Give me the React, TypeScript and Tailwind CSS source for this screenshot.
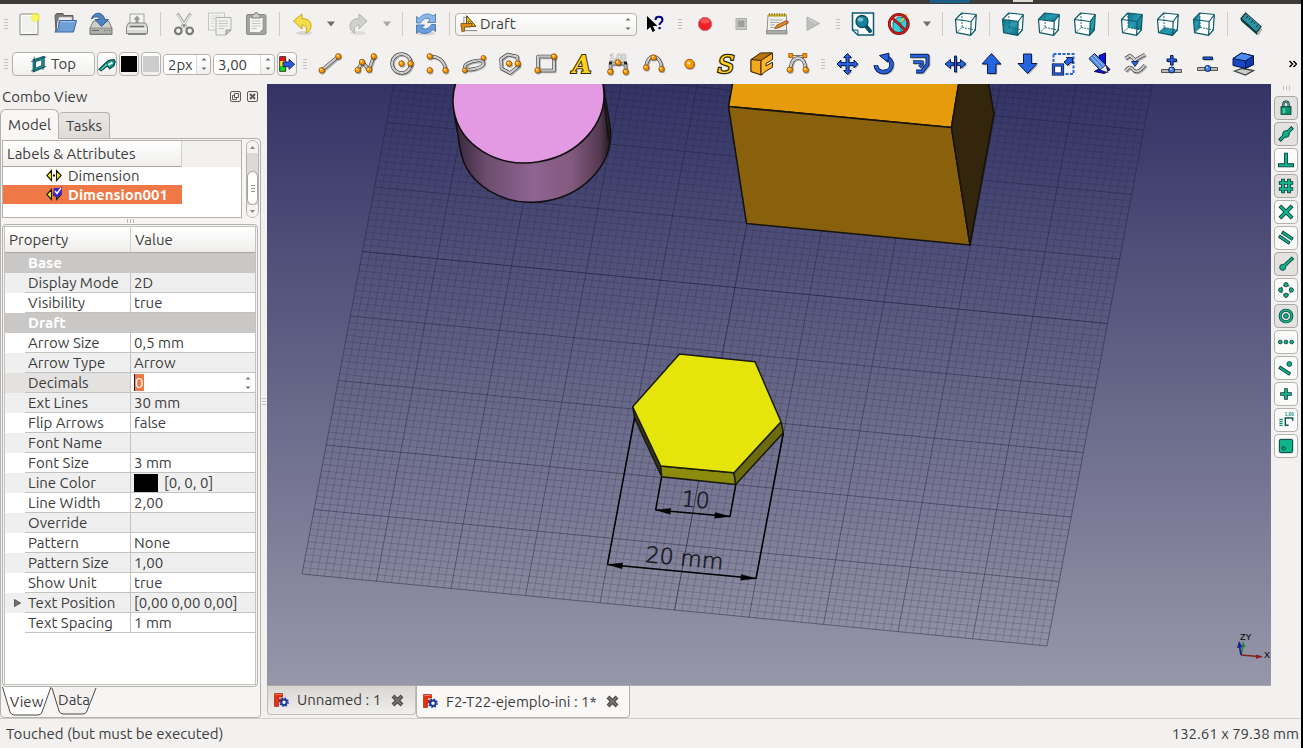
import React, { useId } from "react";

type Kids = { children?: React.ReactNode };

/* ---------- drawing helpers ---------- */

function Svg({ children, size = 24 }: Kids & { size?: number }) {
  return (
    <svg width={size} height={size} viewBox="0 0 24 24" fill="none" aria-hidden="true" className="shrink-0 overflow-visible">
      {children}
    </svg>
  );
}

function Ball({ x, y, r = 2.7 }: { x: number; y: number; r?: number }) {
  return (
    <g>
      <circle cx={x + 0.8} cy={y + 1} r={r + 0.4} fill="#00000055" />
      <circle cx={x} cy={y} r={r} fill="#ff9900" stroke="#9a5200" strokeWidth="0.9" />
      <circle cx={x - 0.8} cy={y - 0.8} r={r * 0.35} fill="#ffe3a8" />
    </g>
  );
}

function Tube({ d }: { d: string }) {
  return (
    <g strokeLinejoin="round">
      <path d={d} stroke="#00000048" strokeWidth="3.6" transform="translate(1 1)" />
      <path d={d} stroke="#4a4a4a" strokeWidth="3.4" />
      <path d={d} stroke="#efefef" strokeWidth="1.9" />
      <path d={d} stroke="#8a8a8a" strokeWidth="0.5" />
    </g>
  );
}

function Blue({ d }: { d: string }) {
  return (
    <g strokeLinejoin="round">
      <path d={d} fill="#00000045" transform="translate(1.2 1.2)" />
      <path d={d} fill="#2563e0" stroke="#0a1c50" strokeWidth="1" />
    </g>
  );
}

function BlueLine({ d, w = 3 }: { d: string; w?: number }) {
  return (
    <g strokeLinejoin="round">
      <path d={d} stroke="#00000045" strokeWidth={w + 1.5} transform="translate(1 1)" />
      <path d={d} stroke="#0a1c50" strokeWidth={w + 1.8} />
      <path d={d} stroke="#2563e0" strokeWidth={w} />
    </g>
  );
}

function Green({ d, w = 3 }: { d: string; w?: number }) {
  return (
    <g>
      <path d={d} stroke="#0a3a3c" strokeWidth={w + 2.4} strokeLinecap="square" />
      <path d={d} stroke="#0fb488" strokeWidth={w} strokeLinecap="square" />
    </g>
  );
}

function Dot({ x, y, r = 2 }: { x: number; y: number; r?: number }) {
  return <circle cx={x} cy={y} r={r} fill="#0fb488" stroke="#0a3a3c" strokeWidth="1.3" />;
}

function Cube({ face }: { face?: "front" | "top" | "right" | "rear" | "bottom" | "left" }) {
  const id = useId();
  const faces = {
    front: "M1.5 7.5 17.2 9.5 16.6 23.4 2.6 20.6Z",
    top: "M1.5 7.5 7.8 1 22.3 2.5 17.2 9.5Z",
    right: "M17.2 9.5 22.3 2.5 21.3 18 16.6 23.4Z",
    rear: "M7.8 1 22.3 2.5 21.3 18 8.2 15.5Z",
    bottom: "M2.6 20.6 8.2 15.5 21.3 18 16.6 23.4Z",
    left: "M1.5 7.5 7.8 1 8.2 15.5 2.6 20.6Z",
  };
  return (
    <Svg>
      <defs>
        <linearGradient id={id} x1="0" y1="0" x2="1" y2="1">
          <stop offset="0" stopColor="#0e7088" />
          <stop offset="0.5" stopColor="#2a9bb2" />
          <stop offset="1" stopColor="#0a6a80" />
        </linearGradient>
      </defs>
      <path d="M1.5 7.5 7.8 1 22.3 2.5 21.3 18 16.6 23.4 2.6 20.6Z" fill="#ffffff" />
      {face && <path d={faces[face]} fill={`url(#${id})`} />}
      <path d="M7.8 1 8.2 15.5 2.6 20.6M8.2 15.5 21.3 18" stroke="#0b5a68" strokeWidth="0.9" strokeDasharray="2 1" />
      <path
        d="M1.5 7.5 7.8 1 22.3 2.5 17.2 9.5ZM17.2 9.5 16.6 23.4 2.6 20.6 1.5 7.5M22.3 2.5 21.3 18 16.6 23.4"
        stroke="#0b5a68"
        strokeWidth="1.2"
        strokeLinejoin="round"
      />
    </Svg>
  );
}

/* ---------- file, view and draft icons ---------- */

const icons = {
  new: (
    <Svg>
      <rect x="3" y="2" width="18" height="20.500" rx="1" fill="#f1f1ee" stroke="#8c8d88" />
      <rect x="4.500" y="3.500" width="15" height="17.500" stroke="#ffffff" />
      <path d="M2 23h20" stroke="#00000030" />
      <circle cx="18.500" cy="5.500" r="5" fill="#f7ee3a99" />
      <circle cx="18.500" cy="5.500" r="2.800" fill="#fff65a" />
    </Svg>
  ),
  open: (
    <Svg>
      <path d="M2 3.500 3.500 1.500H10l1 2h9V8H4L3 19Z" fill="#7b7b78" stroke="#5e5e5b" />
      <path d="M6 5h13v6H5Z" fill="#eeeeec" stroke="#a5a5a0" strokeWidth="0.600" />
      <path d="M6.500 8.500h17L20.500 20H1.800L5 17Z" fill="#6ea0d8" stroke="#3565a4" />
      <path d="M7.300 9.600H22" stroke="#a9c8ec" />
    </Svg>
  ),
  save: (
    <Svg>
      <path d="M4.500 9h15l3.500 7v6.500H1V16Z" fill="#cfd0cc" stroke="#7d7e7a" />
      <path d="M1.500 16h21v6h-21Z" fill="#aeb0ab" stroke="#7d7e7a" strokeWidth="0.700" />
      <path d="M3 18.500h7M15 18.500h1M17.500 18.500h1M20 18.500h1" stroke="#6b6c69" />
      <path d="M2.500 7C3.500 2 8 .5 11 1.500c3 1 4.500 3.500 4.500 6h4l-7 7-6.500-7h4c0-3-3-4-7.500-.500Z" fill="#4f82c0" stroke="#2c578f" strokeWidth="0.900" />
    </Svg>
  ),
  print: (
    <Svg>
      <path d="M5 12V2h14v10" fill="#f4f4f2" stroke="#a2a39f" />
      <path d="M12 3.500 15.500 7.500H13.500V11h-3V7.500h-2Z" fill="#9a9b98" />
      <path d="M3.500 11h17L22.500 15v6.500h-21V15Z" fill="#d9dad7" stroke="#868783" />
      <path d="M5 14.500h14" stroke="#6e6f6c" strokeWidth="1.500" />
      <path d="M2 17h20" stroke="#ffffff" />
      <path d="M3 22.500h18" stroke="#868783" />
    </Svg>
  ),
  cut: (
    <Svg>
      <path d="M5.500 1.500 15 16.500M18.500 1.500 9 16.500" stroke="#a9aaa6" strokeWidth="3" />
      <path d="M5.700 2.500 14.500 16M18.300 2.500 9.500 16" stroke="#f2f2f0" strokeWidth="1.200" />
      <circle cx="6.300" cy="18.800" r="3.300" stroke="#7a7b78" strokeWidth="2.200" />
      <circle cx="17.700" cy="18.800" r="3.300" stroke="#7a7b78" strokeWidth="2.200" />
      <circle cx="12" cy="13.500" r="1.200" fill="#7a7b78" />
    </Svg>
  ),
  copy: (
    <Svg>
      <rect x="0.500" y="1" width="16" height="17" fill="#f3f3f1" stroke="#c4c5c1" />
      <path d="M3 4h11M3 6.500h11M3 9h3M3 11.500h3M3 14h3" stroke="#d5d5d2" />
      <path d="M8 5.500h15V18l-5 5H8Z" fill="#f0f0ee" stroke="#b0b1ad" />
      <path d="M10.500 9h9.500M10.500 11.500h9.500M10.500 14h9.500M10.500 16.500h6" stroke="#c6c6c3" />
      <path d="M23 18h-5v5Z" fill="#c8c9c5" stroke="#989994" />
    </Svg>
  ),
  paste: (
    <Svg>
      <rect x="2.500" y="2.500" width="19.500" height="20" rx="1.500" fill="#a3a4a1" stroke="#8a8b88" />
      <path d="M5.500 5.500h13.500V17l-3.500 3.500H5.500Z" fill="#f4f4f2" stroke="#8e8f8b" strokeWidth="0.700" />
      <path d="M7.500 9h9M7.500 11.500h9M7.500 14h9M7.500 16.500h5" stroke="#c6c6c3" />
      <path d="M8 2.500h2.500L11 .8h2.500l.5 1.700H16V6H8Z" fill="#cfd0cd" stroke="#7e7f7b" />
    </Svg>
  ),
  undo: (
    <Svg>
      <ellipse cx="13" cy="21" rx="8" ry="2" fill="#0000001c" />
      <path d="M2.500 9 11 2v4.500c6 0 9.500 3 9 8-.300 3-2 5.500-5 6.500 1.500-4 .500-7.500-4-8V17Z" fill="#f6dc48" stroke="#c8a416" strokeLinejoin="round" />
    </Svg>
  ),
  redo: (
    <Svg>
      <ellipse cx="11" cy="21" rx="8" ry="2" fill="#00000014" />
      <path d="M20 9 12 2v4.500c-6 0-9 3-9 8 0 3 2 5.500 5 6.500-1.500-4-.500-7.500 4-8V17Z" fill="#d0d0ce" stroke="#b4b5b1" strokeLinejoin="round" />
    </Svg>
  ),
  refresh: (
    <Svg>
      <ellipse cx="12" cy="21.500" rx="9" ry="2" fill="#0000001c" />
      <path d="M2.500 11V4.500L5 6.500C9 1 16 1 19 4l2.500-2V10.500H13.500l2.500-2.500C13.500 5.500 10 5.500 6.500 11Z" fill="#8db6e6" stroke="#4a7fc0" strokeWidth="0.900" />
      <path d="M21.500 12.500V19.500L19 17.500C15 22.500 8 22.500 5 19.500l-2.500 2V13h8L8 15.500c3 2.500 6 2 9.500-3Z" fill="#6d9dd8" stroke="#3f74b6" strokeWidth="0.900" />
    </Svg>
  ),
  whats: (
    <Svg>
      <path d="M4 4v14l3.300-3L9.500 20l2.600-1.200L10 14h4.500Z" fill="#000000" />
      <path d="M12.500 8c0-4.500 7-4.500 7 0 0 2.500-3 2.500-3 5" stroke="#000080" strokeWidth="2" />
      <path d="M15.500 15h2.200v2.200h-2.200Z" fill="#000080" />
    </Svg>
  ),
  record: (
    <Svg>
      <circle cx="12" cy="12" r="6.700" fill="#ec2229" stroke="#c8777a" />
      <ellipse cx="12" cy="9" rx="4.500" ry="2.500" fill="#ff6d70aa" />
    </Svg>
  ),
  stop: (
    <Svg>
      <rect x="7" y="6.500" width="10.500" height="11" fill="#c6c6c4" stroke="#b0b1ae" />
      <rect x="9" y="8.500" width="6.500" height="6.500" fill="#9d9e9b" />
    </Svg>
  ),
  macro: (
    <Svg>
      <path d="M3 3h18.500V19.500H2Z" fill="#f0f0ee" stroke="#8f908c" />
      <path d="M1.500 18.500h20.500V22H1.500Z" fill="#a9aaa6" stroke="#7c7d79" strokeWidth="0.700" />
      <path d="M3 2h18.500v2.500H3Z" fill="#c8b335" />
      <path d="M4.500 1v3.500M7 1v3.500M9.500 1v3.500M12 1v3.500M14.500 1v3.500M17 1v3.500M19.500 1v3.500" stroke="#8a7616" strokeWidth="0.800" />
      <path d="M5 8h12M5 10.500h9M5 13h5M5 15.500h4" stroke="#a9a9a6" />
      <path d="M9.500 16.500 12 13l9.500-4.500 1.800 2.500L13.500 16Z" fill="#d98a28" stroke="#7a4a12" strokeWidth="0.800" />
      <path d="m20.500 9 1.500-1.300 2 2.500-1.500 1Z" fill="#e05050" />
    </Svg>
  ),
  play: (
    <Svg>
      <path d="M6 5 18.500 11.500 6 18.500Z" fill="#bdbebb" stroke="#b0b1ae" />
      <path d="M7 7 15.500 11.500" stroke="#dcdcda" />
    </Svg>
  ),
  fit: (
    <Svg>
      <path d="M1.500 1h21v22H7l-5.500-5Z" fill="#ffffff" stroke="#0b5a70" strokeWidth="1.500" />
      <path d="M1.500 18H7v5Z" fill="#cfe6ea" stroke="#0b5a70" />
      <path d="m14.500 13.500 4.500 5.500" stroke="#0b4e60" strokeWidth="4" strokeLinecap="round" />
      <circle cx="11" cy="9.500" r="6" fill="#16819a" stroke="#0b4e60" strokeWidth="1.300" />
      <ellipse cx="9.500" cy="7.500" rx="2.800" ry="2" fill="#7cc6d4" />
    </Svg>
  ),
  nodraw: (
    <Svg>
      <path d="M6 10 11 5l9 1-1 11-5 4-8-1Z" fill="#35d0d8" stroke="#0b7a86" />
      <path d="M6 10 14 11l6-5M14 11v10" stroke="#0b8a96" />
      <path d="m14 10 6-8" stroke="#e8c030" strokeWidth="2" />
      <circle cx="11.800" cy="12" r="9.500" stroke="#8b1010" strokeWidth="2.800" />
      <path d="m5 5.500 13.500 13" stroke="#8b1010" strokeWidth="2.800" />
      <circle cx="11.800" cy="12" r="9.500" stroke="#cc2020" strokeWidth="1.300" />
      <path d="m5 5.500 13.500 13" stroke="#cc2020" strokeWidth="1.300" />
    </Svg>
  ),
  ruler: (
    <Svg>
      <path d="m8 2 14.500 14.500-4 6L4 9Z" fill="#00000040" transform="translate(1 1)" />
      <path d="M6.500 1 22 14.500 17.500 20.500 2 6.500Z" fill="#2a96a6" stroke="#123238" strokeWidth="1.200" />
      <path d="m2 6.500 15.500 14 .5 2L2.500 9Z" fill="#0c4854" stroke="#123238" strokeWidth="0.800" />
      <path d="m9 3.500-2 3M11.500 5.500l-1.500 2M14 8l-2 3M16.500 10l-1.500 2M19 12.500l-2 3" stroke="#0a2a30" />
      <path d="M7.500 2.300 21 14.300" stroke="#5cc0cc" strokeWidth="0.600" />
    </Svg>
  ),
  line: (
    <Svg>
      <Tube d="M4 18 20 4.500" />
      <Ball x={3.7} y={18.3} />
      <Ball x={20.3} y={4.3} />
    </Svg>
  ),
  wire: (
    <Svg>
      <Tube d="M3.700 18 8 10l7 7.500L19.700 4.500" />
      <Ball x={3.7} y={18} />
      <Ball x={8} y={10} />
      <Ball x={15} y={17.5} />
      <Ball x={19.7} y={4.3} />
    </Svg>
  ),
  circle: (
    <Svg>
      <Tube d="M21 11.500a9.500 9.500 0 1 1-19 0 9.500 9.500 0 0 1 19 0Z" />
      <Ball x={11.5} y={11.5} />
      <Ball x={20.5} y={11.5} />
    </Svg>
  ),
  arc: (
    <Svg>
      <Tube d="M4 4.500C13 4 19 10 19.500 18" />
      <Ball x={3.7} y={4.3} />
      <Ball x={3.7} y={18.3} />
      <Ball x={19.5} y={18.3} />
    </Svg>
  ),
  ellipse: (
    <Svg>
      <Tube d="M2.500 15.500C2 10 21 5.500 21.500 10.500 22 16 4 20 2.500 15.500Z" />
      <Ball x={2.7} y={18.3} r={2.3} />
      <Ball x={21.3} y={5.8} r={2.3} />
    </Svg>
  ),
  polygon: (
    <Svg>
      <Tube d="M9.500 2.500 19 4.500 20.500 14 12 21 3.500 16.500 3 7Z" />
      <Ball x={11} y={11.5} />
      <Ball x={19.7} y={11.5} />
    </Svg>
  ),
  rect: (
    <Svg>
      <Tube d="M4 4.500H20V18.500H4Z" />
      <Ball x={3.5} y={18.3} />
      <Ball x={20} y={4.5} />
    </Svg>
  ),
  text: (
    <Svg>
      <text x="12" y="21" textAnchor="middle" fontFamily="DejaVu Serif" fontWeight="700" fontStyle="italic" fontSize="24" fill="#ffd21a" stroke="#2c2500" strokeWidth="2" paintOrder="stroke">A</text>
    </Svg>
  ),
  dim: (
    <Svg>
      <Tube d="M4.500 19V11.500h15V19" />
      <text x="12" y="7.500" textAnchor="middle" fontFamily="Liberation Sans" fontSize="8.500" fill="#ffffff" stroke="#888888" strokeWidth="0.800" paintOrder="stroke">1,00</text>
      <path d="M3 9.500h3v3H3ZM18 9.500h3v3h-3Z" fill="#222222" />
      <Ball x={12} y={10.5} />
      <Ball x={4.3} y={19.7} />
      <Ball x={19.7} y={19.7} />
    </Svg>
  ),
  bspline: (
    <Svg>
      <Tube d="M4 15.500C5 0 18.500 1 20 17" />
      <Ball x={11.5} y={5.5} />
      <Ball x={4.2} y={15.5} />
      <Ball x={19.5} y={17} />
    </Svg>
  ),
  point: (
    <Svg>
      <Ball x={11.5} y={12} r={4.7} />
    </Svg>
  ),
  shapestring: (
    <Svg>
      <text x="12" y="20.500" textAnchor="middle" fontFamily="DejaVu Serif" fontStyle="italic" fontSize="25" fill="#ffd21a" stroke="#2c2500" strokeWidth="2.500" paintOrder="stroke">S</text>
    </Svg>
  ),
  facebinder: (
    <Svg>
      <path d="M1 7.500 10.500 1 22 .8 12 8V23L1 19.500Z" fill="#b87408" stroke="#3a2500" strokeLinejoin="round" />
      <path d="M1 7.500 11 8.500V23L1 19.500Z" fill="#f5a81c" stroke="#3a2500" strokeLinejoin="round" />
      <path d="M11 8.500 22.500 1v6.500L16 11.500v2.500l6.500-3.800v5L16 19l-5 4Z" fill="#ffb52b" stroke="#3a2500" strokeLinejoin="round" />
    </Svg>
  ),
  bezier: (
    <Svg>
      <path d="M4.500 3.500h15" stroke="#777777" />
      <Tube d="M4.500 17C5 9.500 7.500 6 12 6s7 3.500 7.500 11" />
      <path d="M2.800 1.500h4v4h-4ZM16.800 1.500h4v4h-4Z" fill="#ff9900" stroke="#9a5200" strokeWidth="0.800" />
      <Ball x={3.8} y={17.7} />
      <Ball x={19.7} y={17.7} />
    </Svg>
  ),
  move: (
    <Svg>
      <Blue d="M11.500 1.500 15.500 5.500H13v5H18V8L22 12l-4 4V13.500h-5v5H15.500l-4 4-4-4H10v-5H5V16l-4-4 4-4v2.500h5v-5H7.500Z" />
    </Svg>
  ),
  rotate: (
    <Svg>
      <BlueLine d="M3.800 13C4 17.500 7.500 20 11.500 20c5 0 8-3.500 8-7.500 0-3-1.500-5.500-5-7" w={2.8} />
      <Blue d="M7.500 3.500 17 1.200 15.500 10Z" />
      <path d="M13 4.500 16 6.500" stroke="#2563e0" strokeWidth="2.500" />
    </Svg>
  ),
  offset: (
    <Svg>
      <BlueLine d="M2 3.800H19.500V12.500L14 19.500H8" w={2.2} />
      <BlueLine d="M5 10H14V12.500L11.500 15" w={1.8} />
    </Svg>
  ),
  trimex: (
    <Svg>
      <Blue d="M1 12 6.500 7.500V10.500h3v3H6.500V16.500ZM22 12 16.500 7.500V10.500h-3v3h3V16.500ZM10.500 4h2v16h-2Z" />
    </Svg>
  ),
  up: (
    <Svg>
      <Blue d="M11.500 1.500 21 12H16v9.500H7.500V12H2Z" />
    </Svg>
  ),
  down: (
    <Svg>
      <Blue d="M11.500 21.500 21 11.500H15.500V2H7.500v9.500H2Z" />
    </Svg>
  ),
  scale: (
    <Svg>
      <rect x="1.500" y="2" width="20" height="20" stroke="#2563d8" strokeWidth="2" strokeDasharray="3 1.500" />
      <rect x="1.500" y="13" width="9" height="9" fill="#ffffff" stroke="#0a1c50" strokeWidth="3.200" />
      <rect x="1.500" y="13" width="9" height="9" stroke="#2563e0" strokeWidth="1.600" />
      <Blue d="m12 10 3.500-3-1-1.500h6V11l-1.500-.800-3.500 3.200Z" />
    </Svg>
  ),
  edit: (
    <Svg>
      <path d="M11 3.500 17.500 1v12l4.500 4.500-5.500 4-10-2 6-3.500Z" fill="#1010e8" stroke="#04043c" strokeLinejoin="round" />
      <path d="M1 6.500 6.500 1.500 18 13l-.5 5-5.500 0Z" fill="#4f8ae6" stroke="#0a1c50" strokeLinejoin="round" />
      <path d="m3 5 11.500 12M5 3l12.500 12.500" stroke="#a9c6f6" strokeWidth="1" />
      <path d="m12 18 6-5 2 7.500Z" fill="#f4f4f4" stroke="#111111" strokeWidth="0.700" />
    </Svg>
  ),
  tospline: (
    <Svg>
      <Tube d="m1.500 6.500 4.500-3 5 4.500L21 2.500" />
      <Tube d="M1.500 19c3-4 5-5 7.500-1.500S15.500 20 21 13" />
      <path d="M7.500 9.500h7L11 14.500Z" fill="#2563e0" stroke="#0a1c50" strokeWidth="0.800" />
    </Svg>
  ),
  addpt: (
    <Svg>
      <path d="M1.500 17.500h20v3H1.500Z" fill="#b9b9b7" stroke="#555555" />
      <Blue d="M10.500 3.500H13v3.500h3.500v2.500H13V13h-2.500V9.500H7V7h3.500Z" />
      <circle cx="11.700" cy="18" r="3" fill="#3b82f6" stroke="#0a1c50" />
      <circle cx="11" cy="17" r="1" fill="#cfe0fa" />
    </Svg>
  ),
  delpt: (
    <Svg>
      <path d="M1.500 15.500h20v3H1.500Z" fill="#b9b9b7" stroke="#555555" />
      <Blue d="M7 5h9.500v2.500H7Z" />
      <circle cx="11.700" cy="16.500" r="3" fill="#3b82f6" stroke="#0a1c50" />
      <circle cx="11" cy="15.500" r="1" fill="#cfe0fa" />
    </Svg>
  ),
  view2d: (
    <Svg>
      <path d="m2.500 19 8-2.500 11 2-8 4.500Z" fill="#cccccc" stroke="#444444" strokeWidth="1.300" />
      <path d="M1 6.500 9.500 1l12 3v8.500l-8 4L1 13.500Z" fill="#1848c8" stroke="#081840" strokeLinejoin="round" />
      <path d="M1 6.500 9.500 1l12 3-8 5Z" fill="#4a8cf0" stroke="#081840" strokeLinejoin="round" />
      <path d="M13.500 9v7.500l8-4V4Z" fill="#1238b0" stroke="#081840" strokeLinejoin="round" />
    </Svg>
  ),
};

type IconName = keyof typeof icons;

/* ---------- toolbar parts ---------- */

function Tool({ icon, label }: { icon: IconName; label: string }) {
  return (
    <button type="button" aria-label={label} className="flex h-9 w-9 shrink-0 items-center justify-center">
      {icons[icon]}
    </button>
  );
}

function ViewTool({ face, label }: { face?: "front" | "top" | "right" | "rear" | "bottom" | "left"; label: string }) {
  return (
    <button type="button" aria-label={label} className="flex h-9 w-9 shrink-0 items-center justify-center">
      <Cube face={face} />
    </button>
  );
}

function Sep() {
  return (
    <div className="flex w-[11px] shrink-0 justify-center">
      <div className="h-6 w-px bg-[#cfcdca]" />
    </div>
  );
}

function Grip({ first = false }: { first?: boolean }) {
  return (
    <div className={first ? "flex w-[11px] shrink-0 flex-col items-center gap-[2px]" : "flex w-[14px] shrink-0 flex-col items-center gap-[2px]"}>
      <div className="h-px w-1 bg-[#c4c2bf]" />
      <div className="h-px w-1 bg-[#c4c2bf]" />
      <div className="h-px w-1 bg-[#c4c2bf]" />
      <div className="h-px w-1 bg-[#c4c2bf]" />
    </div>
  );
}

function Caret({ label, muted = false }: { label: string; muted?: boolean }) {
  return (
    <button type="button" aria-label={label} className="flex h-9 w-5 shrink-0 items-center justify-center">
      <svg width="8" height="6" viewBox="0 0 8 6" aria-hidden="true">
        <path d="M0 .5h8L4 5.500Z" fill={muted ? "#a8a7a4" : "#6f6e6b"} />
      </svg>
    </button>
  );
}

function StepArrows() {
  return (
    <svg width="6" height="14" viewBox="0 0 6 14" aria-hidden="true">
      <path d="M.5 3.500h5L3 1ZM.5 10.500h5L3 13Z" fill="#6f6e6b" />
    </svg>
  );
}

const frame = "shrink-0 rounded border border-[#b5b2ae] bg-linear-to-b from-white to-[#f1f0ee]";

function SmallButton({ label, children }: Kids & { label: string }) {
  return (
    <button type="button" aria-label={label} className={`${frame} flex h-6 w-5 items-center justify-center`}>
      {children}
    </button>
  );
}

function Spin({ label, value, wide = false }: { label: string; value: string; wide?: boolean }) {
  return (
    <div className={`${frame} flex h-[21px] items-center overflow-hidden ${wide ? "w-[62px]" : "w-[48px]"}`}>
      <input aria-label={label} defaultValue={value} className={`h-full min-w-0 bg-white pl-1 outline-none ${wide ? "w-[46px]" : "w-[32px]"}`} />
      <div className="flex h-full flex-1 items-center justify-center border-l border-[#dddbd8]">
        <StepArrows />
      </div>
    </div>
  );
}

function TopToolbar() {
  return (
    <div className="flex h-10 items-center overflow-hidden">
      <Grip first />
      <Tool icon="new" label="New" />
      <Tool icon="open" label="Open" />
      <Tool icon="save" label="Save" />
      <Tool icon="print" label="Print" />
      <Sep />
      <Tool icon="cut" label="Cut" />
      <Tool icon="copy" label="Copy" />
      <Tool icon="paste" label="Paste" />
      <Sep />
      <Tool icon="undo" label="Undo" />
      <Caret label="Undo history" />
      <Tool icon="redo" label="Redo" />
      <Caret label="Redo history" muted />
      <Sep />
      <Tool icon="refresh" label="Refresh" />
      <Sep />
      <div className="relative shrink-0">
        <select aria-label="Workbench" className={`${frame} block h-[23px] w-[182px] appearance-none pl-6 leading-5 outline-none`}>
          <option>Draft</option>
        </select>
        <span className="pointer-events-none absolute top-0.5 left-1.5">
          <Svg size={17}>
            <path d="M4 2v18M4 4h4" stroke="#a0a0a0" strokeWidth="1.500" />
            <path d="M8 1v15h13Z" fill="#ffd21a" stroke="#3a2a00" strokeWidth="1.300" />
            <path d="M11 8v5h5Z" fill="#f2f1f0" stroke="#3a2a00" />
            <path d="M0 12h14l2 2-2 3H5v6H1v-6H0Z" fill="#e08a10" stroke="#6a3a00" />
            <path d="M6 22h17" stroke="#888888" strokeWidth="1.500" />
          </Svg>
        </span>
        <span className="pointer-events-none absolute top-1 right-1.5">
          <StepArrows />
        </span>
      </div>
      <Tool icon="whats" label="What's this?" />
      <Grip />
      <Tool icon="record" label="Record macro" />
      <Tool icon="stop" label="Stop macro" />
      <Tool icon="macro" label="Macros" />
      <Tool icon="play" label="Run macro" />
      <Grip />
      <Tool icon="fit" label="Fit all" />
      <Tool icon="nodraw" label="Draw style" />
      <Caret label="Draw style options" />
      <Sep />
      <ViewTool label="Axonometric view" />
      <Sep />
      <ViewTool face="front" label="Front view" />
      <ViewTool face="top" label="Top view" />
      <ViewTool face="right" label="Right view" />
      <Sep />
      <ViewTool face="rear" label="Rear view" />
      <ViewTool face="bottom" label="Bottom view" />
      <ViewTool face="left" label="Left view" />
      <Sep />
      <Tool icon="ruler" label="Measure distance" />
    </div>
  );
}

function DraftToolbar() {
  return (
    <div className="flex h-10 items-center overflow-hidden">
      <Grip first />
      <div className="flex shrink-0 items-center gap-0.5 px-px">
        <button type="button" className={`${frame} flex h-6 w-[83px] items-center justify-center gap-1`}>
          <Svg size={16}>
            <path d="M5 7 18 3v13L5 21Z" stroke="#0a3a44" strokeWidth="5" />
            <path d="M5 7 18 3v13L5 21Z" stroke="#1bb5b5" strokeWidth="3" />
            <path d="M0 8.500 23 1.500M0 22.500l23-7M5 1v23M18 0v21" stroke="#0a3a44" strokeWidth="1" />
          </Svg>
          <span>Top</span>
        </button>
        <SmallButton label="Construction mode">
          <Svg size={17}>
            <path d="M0 19 9 10l5-4 7-1 2 3-2 6-6 4-3-4-9 7Z" fill="#0f9c84" stroke="#0a3a3c" strokeWidth="1.500" />
            <path d="m13 13 6-4" stroke="#e8f4f2" strokeWidth="3" />
            <path d="m2 20 9-8" stroke="#4fd8c0" strokeWidth="1.500" />
          </Svg>
        </SmallButton>
        <SmallButton label="Line color">
          <span className="h-4 w-4 shrink-0 bg-black" />
        </SmallButton>
        <SmallButton label="Face color">
          <span className="h-4 w-4 shrink-0 bg-[#cccccc]" />
        </SmallButton>
        <Spin label="Line width" value="2px" />
        <Spin label="Text size" value="3,00" wide />
        <SmallButton label="Apply style">
          <Svg size={16}>
            <path d="M1 1h9v7H1Z" fill="#ee1111" />
            <path d="M1 8h9v7H1Z" fill="#ffee00" />
            <path d="M1 15h9v8H1Z" fill="#11dd22" />
            <path d="M1 1h9v22H1Z" stroke="#111111" strokeWidth="1.200" />
            <path d="M6 9h9V5l8.500 7.500L15 20v-4H6Z" fill="#2a5ae0" stroke="#0a1c50" strokeWidth="1.300" />
          </Svg>
        </SmallButton>
      </div>
      <Grip />
      <Tool icon="line" label="Line" />
      <Tool icon="wire" label="Wire" />
      <Tool icon="circle" label="Circle" />
      <Tool icon="arc" label="Arc" />
      <Tool icon="ellipse" label="Ellipse" />
      <Tool icon="polygon" label="Polygon" />
      <Tool icon="rect" label="Rectangle" />
      <Tool icon="text" label="Text" />
      <Tool icon="dim" label="Dimension" />
      <Tool icon="bspline" label="B-spline" />
      <Tool icon="point" label="Point" />
      <Tool icon="shapestring" label="Shape from text" />
      <Tool icon="facebinder" label="Facebinder" />
      <Tool icon="bezier" label="Bezier curve" />
      <Grip />
      <Tool icon="move" label="Move" />
      <Tool icon="rotate" label="Rotate" />
      <Tool icon="offset" label="Offset" />
      <Tool icon="trimex" label="Trimex" />
      <Tool icon="up" label="Upgrade" />
      <Tool icon="down" label="Downgrade" />
      <Tool icon="scale" label="Scale" />
      <Tool icon="edit" label="Edit" />
      <Tool icon="tospline" label="Wire to B-spline" />
      <Tool icon="addpt" label="Add point" />
      <Tool icon="delpt" label="Remove point" />
      <Tool icon="view2d" label="Shape 2D view" />
      <button type="button" aria-label="More tools" className="mr-1 ml-auto shrink-0 p-0">
        <svg width="8" height="8" viewBox="0 0 8 8" fill="none" aria-hidden="true">
          <path d="m.5 1 3 3-3 3M4.500 1l3 3-3 3" stroke="#000000" strokeWidth="1.500" />
        </svg>
      </button>
    </div>
  );
}

/* ---------- combo view ---------- */

function TreeIcon({ checked = false }: { checked?: boolean }) {
  return (
    <svg width="16" height="14" viewBox="0 0 16 14" aria-hidden="true" className="shrink-0 overflow-visible">
      <path d="M5.500 1.500v10L.8 6.500ZM10.500 1.500v10l4.700-5Z" fill="#f6ee20" stroke="#1a1a00" strokeWidth="1.100" />
      <path d="M7 5.500h2v2H7Z" fill="#000000" />
      {checked && (
        <g>
          <path d="M8 0h5l3-1v6l-3 4H9L7 6Z" fill="#3a24c8" />
          <path d="m9 3 2 2.500L15 0" stroke="#ffffff" strokeWidth="1.500" fill="none" />
        </g>
      )}
    </svg>
  );
}

type Row = { name: string; value?: string; group?: boolean; shade?: boolean; kind?: "edit" | "color" | "expand" };

const rows: Row[] = [
  { name: "Base", group: true },
  { name: "Display Mode", value: "2D", shade: true },
  { name: "Visibility", value: "true" },
  { name: "Draft", group: true },
  { name: "Arrow Size", value: "0,5 mm" },
  { name: "Arrow Type", value: "Arrow", shade: true },
  { name: "Decimals", value: "0", kind: "edit" },
  { name: "Ext Lines", value: "30 mm", shade: true },
  { name: "Flip Arrows", value: "false" },
  { name: "Font Name", value: "", shade: true },
  { name: "Font Size", value: "3 mm" },
  { name: "Line Color", value: "[0, 0, 0]", shade: true, kind: "color" },
  { name: "Line Width", value: "2,00" },
  { name: "Override", value: "", shade: true },
  { name: "Pattern", value: "None" },
  { name: "Pattern Size", value: "1,00", shade: true },
  { name: "Show Unit", value: "true" },
  { name: "Text Position", value: "[0,00 0,00 0,00]", shade: true, kind: "expand" },
  { name: "Text Spacing", value: "1 mm" },
];

function PropertyTable() {
  return (
    <table className="w-full table-fixed border-separate border-spacing-0 text-left">
      <colgroup>
        <col className="w-5" />
        <col className="w-[106px]" />
        <col />
      </colgroup>
      <thead>
        <tr className="h-[26px] bg-linear-to-b from-white to-[#efeeec]">
          <th colSpan={2} className="border-r border-b border-r-[#d2d0cd] border-b-[#aaa7a3] p-0 pl-1 font-normal">Property</th>
          <th className="border-b border-[#aaa7a3] p-0 pl-1 font-normal">Value</th>
        </tr>
      </thead>
      <tbody>
        {rows.map((r) =>
          r.group ? (
            <tr key={r.name} className="h-5 bg-[#c9c8c6] font-bold text-white">
              <td className="p-0" />
              <td colSpan={2} className="p-0 pl-[3px] leading-5">{r.name}</td>
            </tr>
          ) : (
            <tr key={r.name} className={r.kind === "edit" ? "h-5 bg-[#e4e2e0]" : r.shade ? "h-5 bg-[#efefef]" : "h-5 bg-white"}>
              <td className="p-0">
                {r.kind === "expand" && (
                  <button type="button" aria-label="Expand" className="flex h-[19px] w-full items-center justify-center pl-1">
                    <svg width="7" height="8" viewBox="0 0 7 8" aria-hidden="true">
                      <path d="M.5.5 6.500 4 .5 7.500Z" fill="#777572" stroke="#3c3c3c" strokeWidth="0.800" />
                    </svg>
                  </button>
                )}
              </td>
              <td className="border-r border-b border-[#c4c2bf] p-0 pt-px pl-[3px] leading-[18px] whitespace-nowrap">{r.name}</td>
              <td className="border-b border-[#c4c2bf] p-0 leading-[18px] whitespace-nowrap">
                {r.kind === "edit" ? (
                  <div className="flex h-[19px] items-center justify-between bg-white pr-1 pl-[3px]">
                    <input aria-label="Decimals" defaultValue="0" className="h-[17px] w-[10px] border-l border-[#222222] bg-[#f07746] text-white outline-none" />
                    <StepArrows />
                  </div>
                ) : r.kind === "color" ? (
                  <div className="flex h-[19px] items-center gap-1.5 pl-[3px]">
                    <span className="h-[18px] w-6 bg-black" />
                    {r.value}
                  </div>
                ) : (
                  <div className="pt-px pl-[3px]">{r.value}</div>
                )}
              </td>
            </tr>
          ),
        )}
      </tbody>
    </table>
  );
}

function ComboView() {
  return (
    <aside className="flex w-[261px] shrink-0 flex-col">
      <div className="flex h-[25px] items-center justify-between pr-0.5 pl-0.5">
        <h2>Combo View</h2>
        <div className="flex gap-1.5 pr-px">
          <button type="button" aria-label="Float">
            <svg width="11" height="11" viewBox="0 0 11 11" fill="none" stroke="#5a5956" aria-hidden="true">
              <rect x="0.500" y="0.500" width="10" height="10" rx="1.500" />
              <path d="M4.500 2.500h4v4h-4ZM4 4.500H2.500v4h4V7" />
            </svg>
          </button>
          <button type="button" aria-label="Close">
            <svg width="11" height="11" viewBox="0 0 11 11" fill="none" stroke="#5a5956" aria-hidden="true">
              <rect x="0.500" y="0.500" width="10" height="10" rx="1.500" />
              <path d="m3 3 5 5M8 3 3 8" strokeWidth="2" />
            </svg>
          </button>
        </div>
      </div>
      <div className="flex h-[29px] items-end">
        <button type="button" className="z-10 -mb-px h-[30px] w-[59px] rounded-t-md border border-b-0 border-[#b5b2ae] bg-[#f8f7f6]">Model</button>
        <button type="button" className="h-[26px] w-[51px] rounded-t border border-b-0 border-l-0 border-[#b5b2ae] bg-linear-to-b from-[#e9e7e5] to-[#dedbd8]">Tasks</button>
      </div>
      <div className="flex flex-1 flex-col rounded-b rounded-tr border border-[#b5b2ae] bg-[#f6f5f4] pt-px">
        <div className="flex h-[78px] gap-1 px-px">
          <div className="min-w-0 flex-1 border border-[#b5b2ae] bg-white">
            <div className="flex h-[26px] bg-[#f2f1f0]">
              <div className="flex w-[179px] items-center border-r border-b border-r-[#d2d0cd] border-b-[#aaa7a3] bg-linear-to-b from-white to-[#f0efed] pl-1">
                Labels &amp; Attributes
              </div>
            </div>
            <div className="flex h-[18px] w-[179px] items-center gap-1.5 pl-[43px]">
              <TreeIcon />
              Dimension
            </div>
            <div className="flex h-[19px] w-[179px] items-center gap-1.5 bg-[#f07746] pl-[43px] font-bold text-white">
              <TreeIcon checked />
              Dimension001
            </div>
          </div>
          <div className="flex w-[13px] flex-col rounded-full border border-[#b5b2ae] bg-[#dcdad7]">
            <button type="button" aria-label="Scroll up" className="flex h-3 items-center justify-center rounded-t-full bg-[#f4f3f2]">
              <svg width="5" height="3" viewBox="0 0 5 3" aria-hidden="true"><path d="M0 3h5L2.500 0Z" fill="#8a8986" /></svg>
            </button>
            <div className="flex-1" />
            <div className="flex h-[34px] flex-col items-center justify-center gap-[2px] rounded-full border border-[#a5a29e] bg-white">
              <div className="h-px w-1 bg-[#999794]" />
              <div className="h-px w-1 bg-[#999794]" />
              <div className="h-px w-1 bg-[#999794]" />
            </div>
            <button type="button" aria-label="Scroll down" className="flex h-3 items-center justify-center rounded-b-full bg-[#f4f3f2]">
              <svg width="5" height="3" viewBox="0 0 5 3" aria-hidden="true"><path d="M0 0h5L2.500 3Z" fill="#8a8986" /></svg>
            </button>
          </div>
        </div>
        <div className="flex h-1.5 items-center justify-center gap-[2px]">
          <div className="h-1 w-px bg-[#b9b7b3]" />
          <div className="h-1 w-px bg-[#b9b7b3]" />
          <div className="h-1 w-px bg-[#b9b7b3]" />
        </div>
        <div className="mr-0.5 ml-px flex flex-1 flex-col rounded border border-[#b5b2ae] p-px">
          <div className="flex-1 border border-[#c4c2bf] bg-white">
            <PropertyTable />
          </div>
        </div>
        <div className="flex h-[30px] items-start pl-px">
          <button type="button" className="relative h-[29px] w-[49px] text-center">
            <svg width="50" height="29" viewBox="0 0 50 29" aria-hidden="true" className="absolute top-0 left-0">
              <path d="M.5 0 8 25q1.500 3 4 3h24q3 0 4-3L49 0" fill="#ffffff" stroke="#4a4a4a" />
            </svg>
            <span className="relative">View</span>
          </button>
          <button type="button" className="relative h-[29px] w-[46px] pb-1 text-center">
            <svg width="47" height="29" viewBox="0 0 47 29" aria-hidden="true" className="absolute top-0 left-0">
              <path d="M1 1 8 24q1.500 3 4 3h20q3 0 4-3L45 1" fill="#f2f1f0" stroke="#4a4a4a" />
            </svg>
            <span className="relative">Data</span>
          </button>
        </div>
      </div>
    </aside>
  );
}

/* ---------- 3D scene ---------- */

function Grid() {
  const fine: string[] = [];
  const coarse: string[] = [];
  const axis: string[] = [];
  for (let i = 0; i <= 100; i++) {
    const bx = 302 + i * 7.45;
    const by = 574 + i * 0.72;
    const lx = 302 + i * 1.21;
    const ly = 574 - i * 6.45;
    const list = i === 50 ? axis : i % 10 === 0 ? coarse : fine;
    list.push(`M${bx} ${by}l121 -645`, `M${lx} ${ly}l745 72`);
  }
  return (
    <g fill="none" stroke="#1c1c38">
      <path d={fine.join("")} strokeOpacity="0.200" strokeWidth="1" />
      <path d={coarse.join("")} strokeOpacity="0.450" strokeWidth="1" />
      <path d={axis.join("")} strokeOpacity="0.650" strokeWidth="1" />
    </g>
  );
}

function Scene() {
  return (
    <svg viewBox="267 84 1004 601" preserveAspectRatio="xMidYMid slice" className="h-full w-full" role="img" aria-label="3D view">
      <defs>
        <linearGradient id="sky" x1="0" y1="0" x2="0" y2="1">
          <stop offset="0" stopColor="#333366" />
          <stop offset="1" stopColor="#9797aa" />
        </linearGradient>
        <linearGradient id="cyl" gradientUnits="userSpaceOnUse" x1="455" y1="0" x2="611" y2="0">
          <stop offset="0" stopColor="#35253a" />
          <stop offset="0.200" stopColor="#6d4c6e" />
          <stop offset="0.500" stopColor="#8f6491" />
          <stop offset="0.750" stopColor="#82597f" />
          <stop offset="0.930" stopColor="#54394f" />
          <stop offset="1" stopColor="#1c141c" />
        </linearGradient>
      </defs>
      <rect x="267" y="84" width="1004" height="601" fill="url(#sky)" />
      <Grid />
      <g stroke="#111111" strokeWidth="1.600" strokeLinejoin="round">
        <path d="M453.800 110.300 460.300 149.700A75.740 64.600 -9.100 0 0 609.800 125.100L603.300 85.700Z" fill="url(#cyl)" />
        <path d="m603.500 97 5 42" fill="none" />
        <ellipse cx="528.500" cy="98" rx="75.740" ry="64.600" transform="rotate(-9.100 528.500 98)" fill="#e39ae2" />
      </g>
      <g stroke="#15130c" strokeWidth="1.600" strokeLinejoin="round">
        <path d="M728.500 106.500 735 70H961L951.500 127.500Z" fill="#e69b0a" />
        <path d="M728.500 106.500 951.500 127.500 970 245 746.500 223.500Z" fill="#89600c" />
        <path d="M951.500 127.500 961 70H986L994 113.500 970 245Z" fill="#33260d" />
      </g>
      <g stroke="#1a1a10" strokeWidth="1.500" strokeLinejoin="round">
        <path d="M632.700 406.700 660.700 466 661.700 476.700 634.500 418Z" fill="#34340f" />
        <path d="M660.700 466 734 472.700 735.700 484.500 661.700 476.700Z" fill="#8c8b0c" />
        <path d="M734 472.700 781 421.700 783.300 432.700 735.700 484.500Z" fill="#6c6b0d" />
        <path d="M679.500 354 755 361.700 781 421.700 734 472.700 660.700 466 632.700 406.700Z" fill="#e5e50a" />
      </g>
      <g stroke="#000000" strokeWidth="1.500" fill="#000000">
        <path d="M634.500 418 607.500 564.500M783.300 433 756 578.500M607.500 564.500 756 578.500M661.500 477 655.700 510M735.700 485 730 516.500M655.700 510 730 516.500" />
        <path
          d="M607.500 564.500 622.600 562.900 622 568.700ZM756 578.500 740.700 580.200 741.300 574.400ZM655.700 510 670.800 508.400 670.200 514.200ZM730 516.500 714.700 518.200 715.300 512.400Z"
          strokeWidth="0.400"
        />
      </g>
      <g fontFamily="DejaVu Sans" fontWeight="200" fontSize="22" fill="#141418" stroke="#141418" strokeWidth="0.500">
        <text x="681" y="506" transform="rotate(5.500 681 506)">10</text>
        <text x="645" y="562" transform="rotate(5.500 645 562)">20 mm</text>
      </g>
      <g fill="none" strokeWidth="1.600">
        <path d="m1241 655 2-9" stroke="#1c8a30" />
        <path d="m1241.500 647 1.500-6 2.500 6Z" fill="#1c8a30" />
        <path d="m1241 655-1.500-9" stroke="#1c1c96" />
        <path d="m1237 648 2-7 3.500 6Z" fill="#1c1c96" />
        <path d="m1241 655 20 1.800" stroke="#8c2020" />
        <path d="m1256 654.500 7 2.300-7 2Z" fill="#8c2020" />
      </g>
      <g fontFamily="Liberation Sans" fontSize="9" fill="#000000">
        <text x="1240" y="640">Z</text>
        <text x="1245.500" y="640">Y</text>
        <text x="1264" y="658">X</text>
      </g>
    </svg>
  );
}

function DocIcon() {
  return (
    <svg width="15" height="15" viewBox="0 0 15 15" aria-hidden="true" className="shrink-0">
      <path d="M.5.5H8.500V4H4.500v2H7v3H4.500v4.500h-4Z" fill="#e8300c" stroke="#8a1408" strokeWidth="0.600" />
      <path d="M1.500 1.500H7.500" stroke="#ff7a50" />
      <circle cx="10" cy="9.200" r="2.700" fill="#ffffff" stroke="#16389c" strokeWidth="2" />
      <circle cx="10" cy="9.200" r="4.200" fill="none" stroke="#16389c" strokeWidth="1.300" strokeDasharray="1.650 1.650" />
    </svg>
  );
}

function CloseX({ label }: { label: string }) {
  return (
    <button type="button" aria-label={label}>
      <svg width="13" height="13" viewBox="0 0 13 13" fill="none" aria-hidden="true">
        <path d="m2 2 9 9M11 2l-9 9" stroke="#4a4947" strokeWidth="4" />
        <path d="m2.500 2.500 8 8M10.500 2.500l-8 8" stroke="#7c7b78" strokeWidth="1.600" />
      </svg>
    </button>
  );
}

function DocTabs() {
  return (
    <div className="flex h-[33px] items-start border-t border-[#a9a7a5]">
      <div className="flex h-[29px] w-[149px] items-center gap-2 rounded-b border border-t-0 border-[#c0bdb9] bg-linear-to-b from-[#d9d6d3] to-[#f0efed] pl-1.5">
        <DocIcon />
        <span className="flex-1 whitespace-nowrap">Unnamed : 1</span>
        <span className="flex pr-[11px]">
          <CloseX label="Close Unnamed" />
        </span>
      </div>
      <div className="flex h-8 w-[214px] items-center gap-2 rounded-b border border-t-0 border-[#b5b2ae] bg-[#f9f8f7] pl-1.5">
        <DocIcon />
        <span className="flex-1 whitespace-nowrap">F2-T22-ejemplo-ini : 1*</span>
        <span className="flex pr-[10px]">
          <CloseX label="Close F2-T22-ejemplo-ini" />
        </span>
      </div>
    </div>
  );
}

/* ---------- snap toolbar ---------- */

const snaps: { label: string; on?: boolean; art: React.ReactNode }[] = [
  {
    label: "Snap lock",
    on: true,
    art: (
      <g>
        <path d="M8 11V6.500a4 4 0 0 1 8 0V11" stroke="#0a3a3c" strokeWidth="3.400" />
        <path d="M8 11V6.500a4 4 0 0 1 8 0V11" stroke="#8fc8b8" strokeWidth="1.200" />
        <rect x="4.500" y="10" width="15" height="11.500" fill="#0f9470" stroke="#0a3a3c" strokeWidth="1.300" />
        <path d="M7 12h4v8H7Z" fill="#3fc8a0" />
      </g>
    ),
  },
  {
    label: "Snap midpoint",
    on: true,
    art: (
      <g>
        <Green d="M4 20 20 4" />
        <circle cx="12" cy="12" r="5" fill="#0fb488" stroke="#0a3a3c" strokeWidth="1.300" />
        <path d="M5 19 19 5" stroke="#0fb488" strokeWidth="3" />
      </g>
    ),
  },
  { label: "Snap perpendicular", art: <Green d="M12 4v13M3 20h18" w={3.5} /> },
  {
    label: "Snap grid",
    on: true,
    art: <Green d="M7.500 4v16M16.500 4v16M4 7.500h16M4 16.500h16" w={3.2} />,
  },
  { label: "Snap intersection", art: <Green d="m5 5 14 14M19 5 5 19" w={3.6} /> },
  { label: "Snap parallel", art: <Green d="m3.500 10.500 12 8M8 4.500l12 8" w={2.8} /> },
  {
    label: "Snap endpoint",
    on: true,
    art: (
      <g>
        <Green d="M8 16 20.500 4.500" />
        <circle cx="7" cy="17" r="4.500" fill="#0fb488" stroke="#0a3a3c" strokeWidth="1.300" />
        <path d="m8 16 5-5" stroke="#0fb488" strokeWidth="3" />
      </g>
    ),
  },
  {
    label: "Snap angle",
    art: (
      <g>
        <circle cx="12" cy="12" r="7.500" stroke="#0a3a3c" strokeWidth="1.500" strokeDasharray="4 2" />
        <Dot x={12} y={4} r={3.2} />
        <Dot x={12} y={20} r={3.2} />
        <Dot x={4} y={12} r={3.2} />
        <Dot x={20} y={12} r={3.2} />
      </g>
    ),
  },
  {
    label: "Snap center",
    on: true,
    art: (
      <g>
        <circle cx="12" cy="12" r="8.800" stroke="#0a3a3c" strokeWidth="4.500" />
        <circle cx="12" cy="12" r="8.800" stroke="#0fb488" strokeWidth="2.400" />
        <Dot x={12} y={12} r={3.5} />
      </g>
    ),
  },
  {
    label: "Snap extension",
    art: (
      <g>
        <Dot x={3.5} y={12} r={2.8} />
        <Dot x={12} y={12} r={2.8} />
        <Dot x={20.5} y={12} r={2.8} />
      </g>
    ),
  },
  {
    label: "Snap near",
    art: (
      <g>
        <Green d="m4 12 12 8" />
        <Dot x={17} y={6} r={3.6} />
      </g>
    ),
  },
  { label: "Snap ortho", art: <Green d="M12 6v12M6 12h12" /> },
  {
    label: "Snap dimensions",
    art: (
      <g>
        <path d="M11 20V9h11v4M10 20h6" stroke="#0a5a4c" strokeWidth="2.200" />
        <path d="M2 11h5M2 14h5M2 17h5M2 20h5" stroke="#0f8a6c" strokeWidth="2" />
        <text x="10" y="6.500" fontFamily="Liberation Sans" fontWeight="700" fontSize="7" fill="#0f8a6c">1,00</text>
      </g>
    ),
  },
  {
    label: "Snap working plane",
    art: (
      <g>
        <rect x="2" y="2" width="20" height="20" rx="2" fill="#0fb488" stroke="#0a3a3c" strokeWidth="1.500" />
        <circle cx="8.500" cy="15.500" r="2.500" stroke="#0a3a3c" strokeWidth="1.500" />
      </g>
    ),
  },
];

function SnapToolbar() {
  return (
    <div className="flex w-[30px] shrink-0 flex-col items-center gap-0.5">
      <div className="flex h-[10px] items-end justify-center gap-[2px] pt-1 pb-1">
        <div className="h-1 w-px shrink-0 bg-[#c4c2bf]" />
        <div className="h-1 w-px shrink-0 bg-[#c4c2bf]" />
        <div className="h-1 w-px shrink-0 bg-[#c4c2bf]" />
      </div>
      {snaps.map((s) => (
        <button
          type="button"
          key={s.label}
          aria-label={s.label}
          aria-pressed={!!s.on}
          className={
            s.on
              ? "flex h-6 w-6 shrink-0 items-center justify-center rounded border border-[#aaa7a3] bg-[#e4e2df]"
              : "flex h-6 w-6 shrink-0 items-center justify-center rounded border border-[#b5b2ae] bg-[#fbfbfa]"
          }
        >
          <Svg size={16}>{s.art}</Svg>
        </button>
      ))}
    </div>
  );
}

/* ---------- window ---------- */

export default function App() {
  return (
    <div className="flex min-h-screen flex-col border-r-2 border-black bg-[#f2f1f0] font-['Ubuntu','Noto_Sans',sans-serif] text-[15px] leading-5 text-[#3c3c3c]">
      <div className="flex h-1 justify-end bg-[#3c3b37]">
        <div className="mr-[43px] h-[3px] w-10 bg-[#1a5f8c]" />
        <div className="mr-[268px] h-0.5 w-5 bg-[#dfdbd2]" />
      </div>
      <TopToolbar />
      <DraftToolbar />
      <div className="flex flex-1">
        <ComboView />
        <div className="flex w-1.5 shrink-0 flex-col items-center justify-center gap-[2px]">
          <div className="h-px w-1 bg-[#c4c2bf]" />
          <div className="h-px w-1 bg-[#c4c2bf]" />
          <div className="h-px w-1 bg-[#c4c2bf]" />
        </div>
        <main className="flex min-w-0 flex-1 flex-col">
          <div className="relative min-h-0 flex-1">
            <div className="absolute inset-0">
              <Scene />
            </div>
          </div>
          <DocTabs />
        </main>
        <SnapToolbar />
      </div>
      <footer className="flex h-[30px] items-center justify-between border-t border-[#d0cecb] pr-0.5 pl-1.5">
        <span>Touched (but must be executed)</span>
        <span>132.61 x 79.38 mm</span>
      </footer>
    </div>
  );
}
